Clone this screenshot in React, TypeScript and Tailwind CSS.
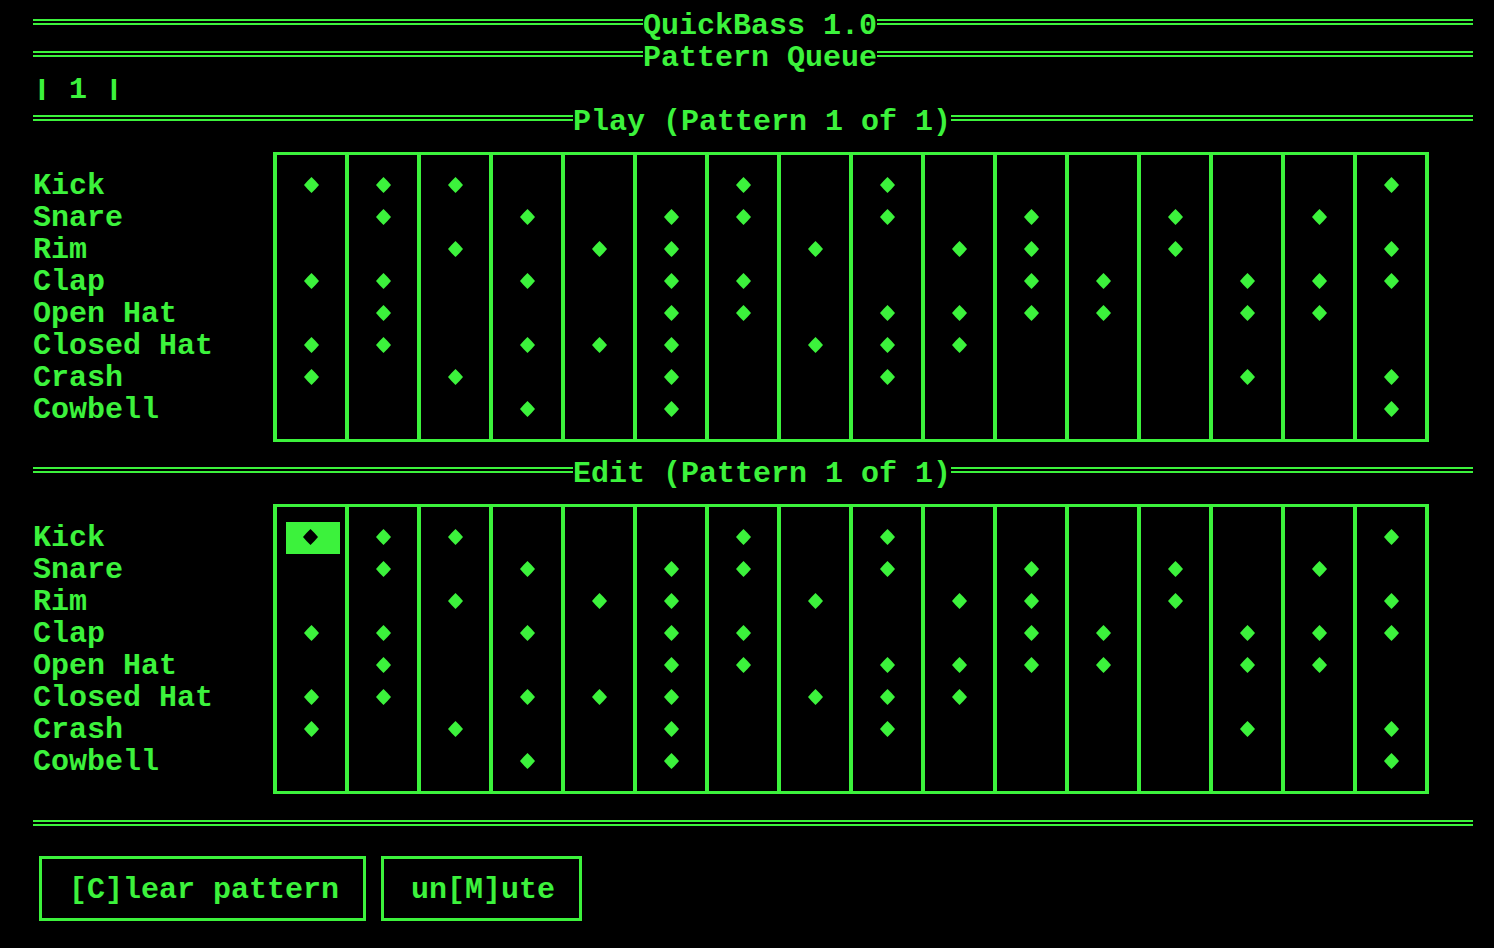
import React from "react";

const LABELS = ["Kick", "Snare", "Rim", "Clap", "Open Hat", "Closed Hat", "Crash", "Cowbell"];
const PATTERN: number[][] = [
  [0, 1, 2, 6, 8, 15],
  [1, 3, 5, 6, 8, 10, 12, 14],
  [2, 4, 5, 7, 9, 10, 12, 15],
  [0, 1, 3, 5, 6, 10, 11, 13, 14, 15],
  [1, 5, 6, 8, 9, 10, 11, 13, 14],
  [0, 1, 3, 4, 5, 7, 8, 9],
  [0, 2, 5, 8, 13, 15],
  [3, 5, 15],
];

function Diamond({ dark }: { dark?: boolean }) {
  return (
    <svg width="15" height="16" viewBox="0 0 15 16" className="block">
      <path
        d="M7.5 0 Q11.8 4 15 8 Q11.8 12 7.5 16 Q3.2 12 0 8 Q3.2 4 7.5 0Z"
        fill={dark ? "#000000" : "#3cf23c"}
      />
    </svg>
  );
}

function TitleRow({ title, leftClass }: { title: string; leftClass: string }) {
  return (
    <div className="flex h-[32px] items-start">
      <div className={`mt-[9px] h-[6px] border-y-2 border-[#3cf23c] ${leftClass}`} />
      <span className="whitespace-pre leading-[32px]">{title}</span>
      <div className="mt-[9px] h-[6px] flex-1 border-y-2 border-[#3cf23c]" />
    </div>
  );
}

function Grid({ cursor }: { cursor?: boolean }) {
  return (
    <div className="flex h-[320px]">
      <div className="w-[240px] pt-[32px]">
        {LABELS.map((l) => (
          <div key={l} className="h-[32px] whitespace-pre leading-[32px]">
            {l}
          </div>
        ))}
      </div>
      <div className="mt-[14px] flex h-[290px] border-x-4 border-y-[3px] border-[#3cf23c]">
        {Array.from({ length: 16 }).map((_, c) => (
          <div
            key={c}
            className={`flex flex-col pt-[15px] pb-[12px] ${c === 0 ? "w-[68px]" : "w-[72px] border-l-4 border-[#3cf23c]"}`}
          >
            {PATTERN.map((row, r) => {
              const on = row.includes(c);
              if (cursor && c === 0 && r === 0) {
                return (
                  <div key={r} className="flex h-[32px] pl-[9px]">
                    <div className="flex h-[32px] w-[54px] items-center justify-center bg-[#3cf23c] pr-[6px] pb-[2px]">
                      <Diamond dark />
                    </div>
                  </div>
                );
              }
              return (
                <div key={r} className="flex h-[32px] items-center justify-center pb-[2px]">
                  {on ? <Diamond /> : null}
                </div>
              );
            })}
          </div>
        ))}
      </div>
    </div>
  );
}

export default function App() {
  return (
    <div className="min-h-screen w-full bg-black pt-[10px] pl-[33px] font-['Liberation_Mono','DejaVu_Sans_Mono',monospace] text-[30px] font-bold text-[#3cf23c]">
      <div className="w-[1440px]">
        <TitleRow title="QuickBass 1.0" leftClass="w-[610px]" />
        <TitleRow title="Pattern Queue" leftClass="w-[610px]" />
        <div className="flex h-[32px] items-start leading-[32px]">
          <span className="inline-block w-[18px] text-center text-[22px] scale-x-150">|</span>
          <span className="inline-block w-[18px]"> </span>
          <span className="inline-block w-[18px] text-center">1</span>
          <span className="inline-block w-[18px]"> </span>
          <span className="inline-block w-[18px] text-center text-[22px] scale-x-150">|</span>
        </div>
        <TitleRow title="Play (Pattern 1 of 1)" leftClass="w-[540px]" />
        <Grid />
        <TitleRow title="Edit (Pattern 1 of 1)" leftClass="w-[540px]" />
        <Grid cursor />
        <div className="flex h-[32px] items-start">
          <div className="mt-[10px] h-[6px] flex-1 border-y-2 border-[#3cf23c]" />
        </div>
        <div className="mt-[14px] ml-[6px] flex gap-[15px]">
          <div className="border-[3px] border-[#3cf23c] pl-[27px] pr-[24px] pt-[15px] pb-[12px] leading-[32px] whitespace-pre">
            [C]lear pattern
          </div>
          <div className="border-[3px] border-[#3cf23c] pl-[27px] pr-[24px] pt-[15px] pb-[12px] leading-[32px] whitespace-pre">
            un[M]ute
          </div>
        </div>
      </div>
    </div>
  );
}
